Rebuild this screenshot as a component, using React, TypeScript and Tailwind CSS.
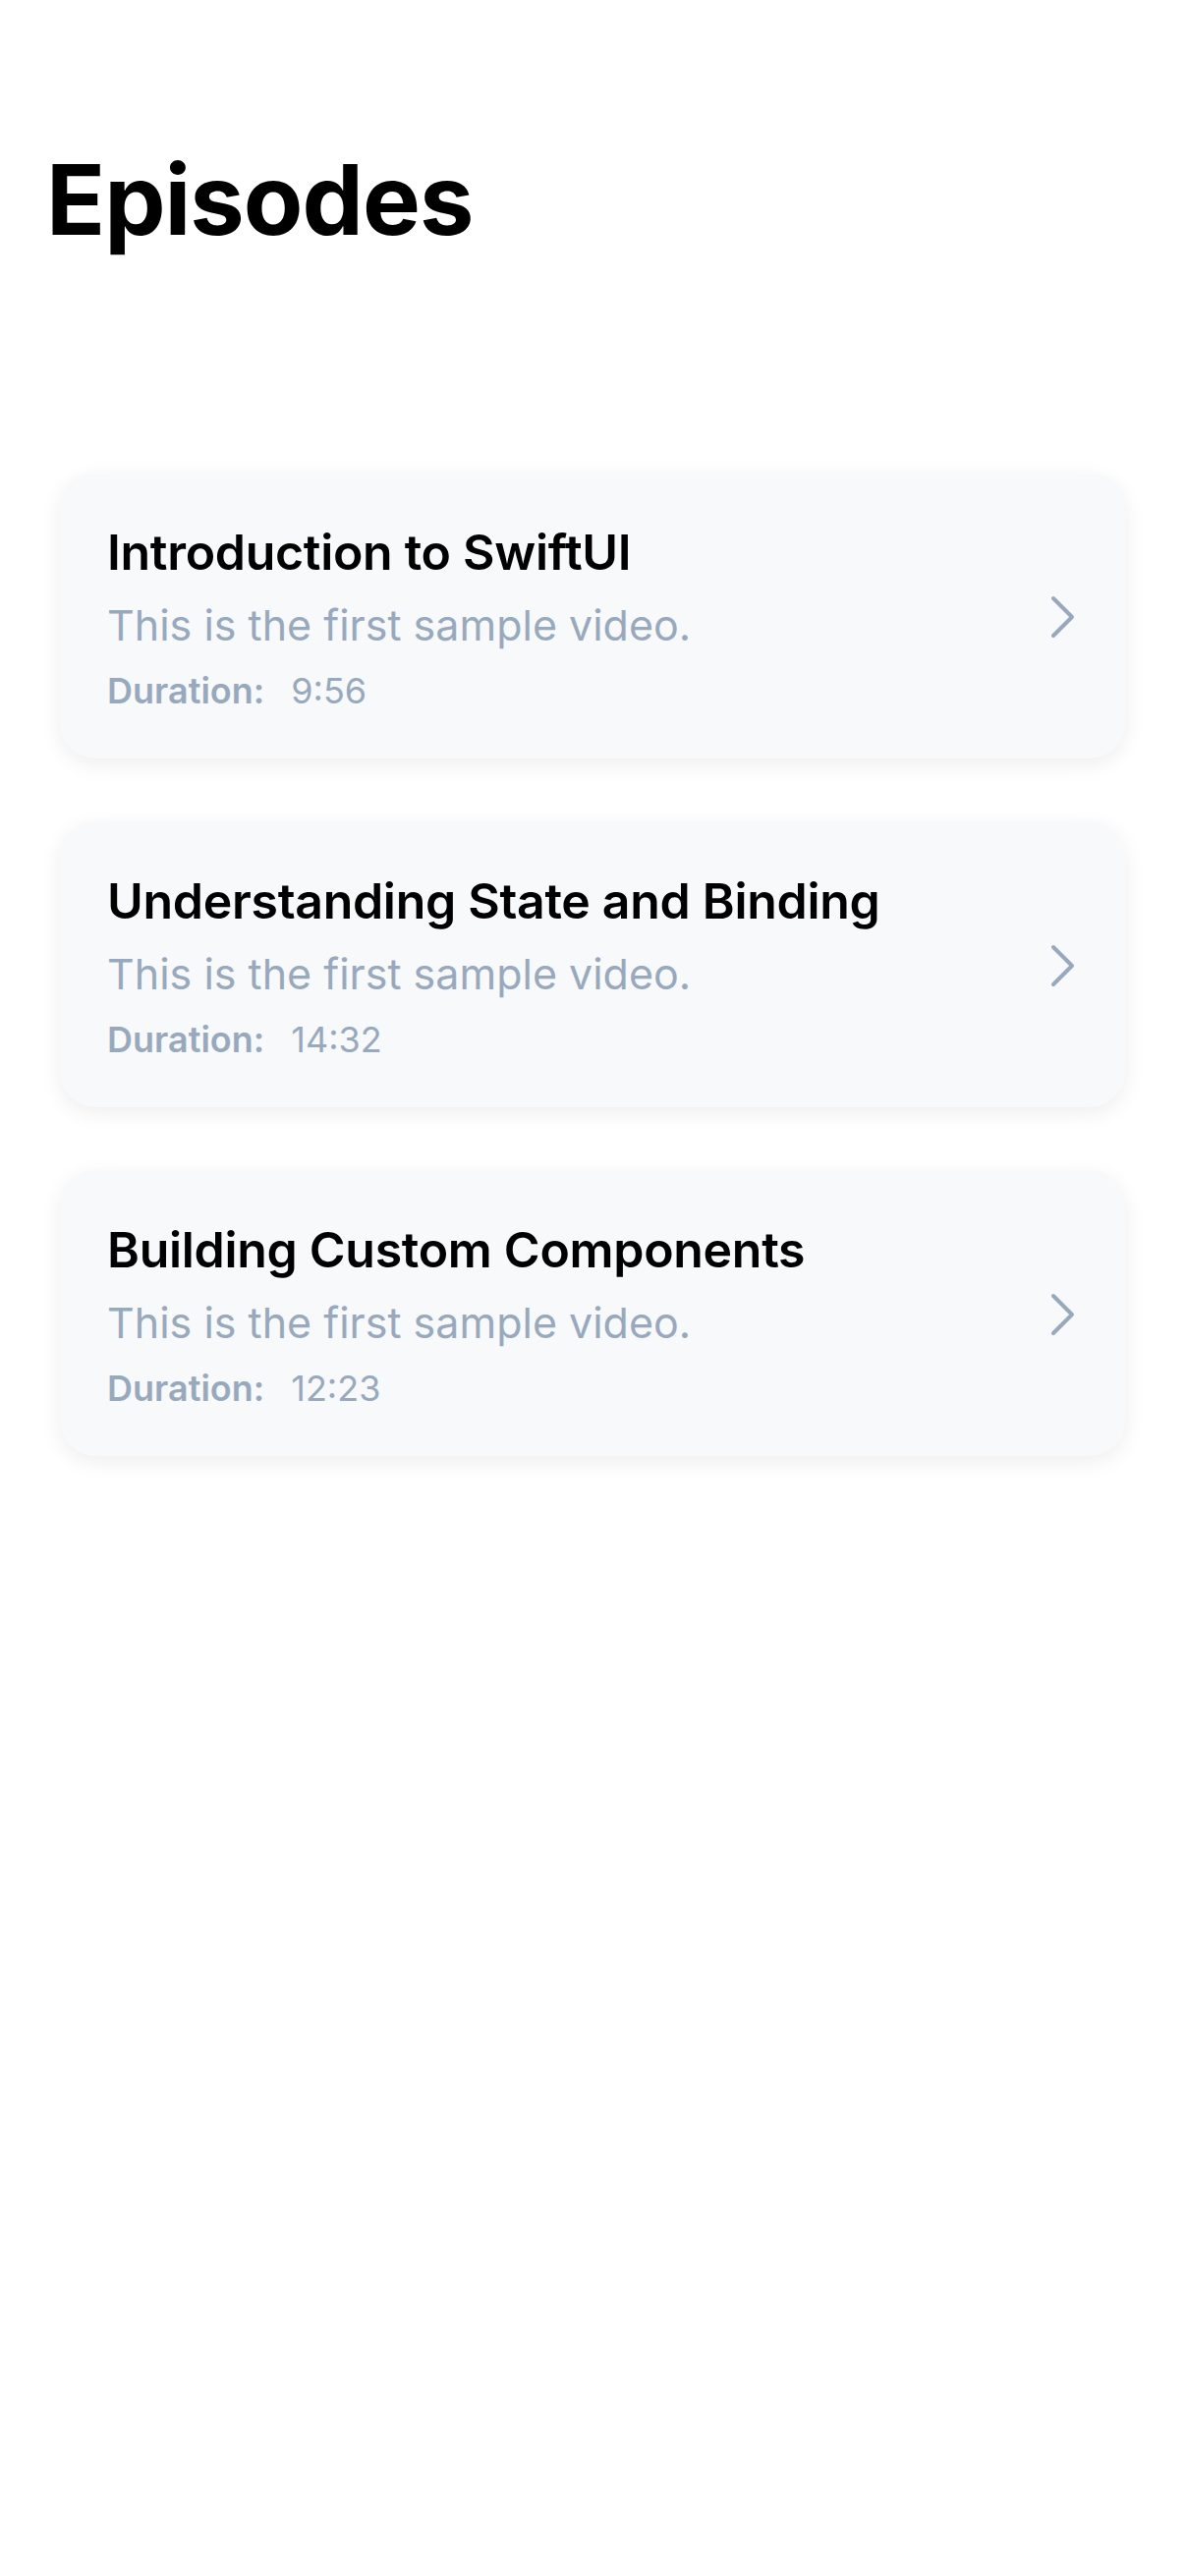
import React from 'react';

interface Episode {
    title: string;
    description: string;
    duration: string;
}

const episodes: Episode[] = [
    { title: 'Introduction to SwiftUI', description: 'This is the first sample video.', duration: '9:56' },
    { title: 'Understanding State and Binding', description: 'This is the first sample video.', duration: '14:32' },
    { title: 'Building Custom Components', description: 'This is the first sample video.', duration: '12:23' },
];

const Chevron: React.FC = () => (
    <svg width="26" height="44" viewBox="0 0 26 44" fill="none" className="shrink-0">
        <path d="M3 3 L22 22 L3 41" stroke="#98a9bd" strokeWidth="4" strokeLinecap="round" strokeLinejoin="round" />
    </svg>
);

const EpisodeCard: React.FC<{ episode: Episode }> = ({ episode }) => (
    <div className="flex items-center justify-between rounded-[36px] bg-[#f8f9fb] pl-[48px] pr-[50px] pt-[51px] pb-[48px] shadow-[0_6px_22px_rgba(0,0,0,0.07)]">
        <div className="flex flex-col">
            <h2 className="text-[50px] leading-[60px] font-semibold text-black tracking-[-0.3px]">{episode.title}</h2>
            <p className="mt-[18px] text-[43px] leading-[52px] text-[#98a9bd]">{episode.description}</p>
            <div className="mt-[20px] flex items-center gap-[27px] text-[36px] leading-[42px] text-[#98a9bd]">
                <span className="font-semibold">Duration:</span>
                <span>{episode.duration}</span>
            </div>
        </div>
        <Chevron />
    </div>
);

export default function App() {
    return (
        <div className="min-h-screen bg-white" style={{ fontFamily: 'Inter, "Noto Sans", sans-serif' }}>
            <div className="px-[47px] pt-[143px]">
                <h1 className="text-[99px] leading-[120px] font-bold text-black tracking-[-1px]">Episodes</h1>
            </div>
            <div className="mt-[218px] flex flex-col gap-[64px] px-[61px] pb-[60px]">
                {episodes.map((ep) => (
                    <EpisodeCard key={ep.title} episode={ep} />
                ))}
            </div>
        </div>
    );
}
